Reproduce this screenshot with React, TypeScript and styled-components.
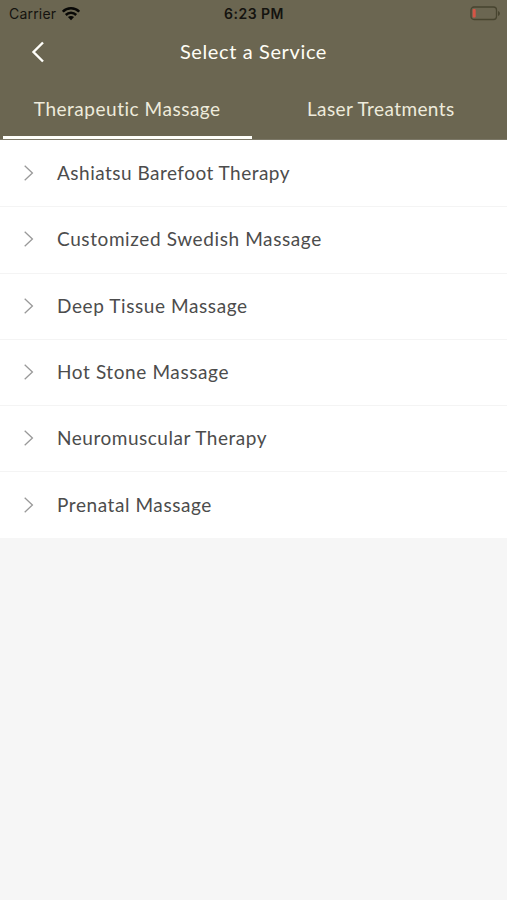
import React from "react";
import styled, { createGlobalStyle } from "styled-components";

const GlobalStyle = createGlobalStyle`
  * { box-sizing: border-box; }
  body { margin: 0; background: #f6f6f6; font-family: Lato, "Open Sans", sans-serif; }
`;

const Screen = styled.div`
  width: 100%;
  height: 900px;
  background: #f6f6f6;
  overflow: hidden;
`;

const Header = styled.header`
  height: 140px;
  background: #6b6651;
  border-bottom: 1px solid #7c7867;
`;

const StatusBar = styled.div`
  display: grid;
  grid-template-columns: 1fr auto 1fr;
  align-items: center;
  height: 27px;
  padding: 0 6px 0 9px;
  color: #14130f;
  font: 400 14px/18px Inter, sans-serif;
`;

const Carrier = styled.div`
  display: flex;
  align-items: center;
  gap: 6px;
  letter-spacing: 0.2px;
`;

const Clock = styled.div`
  margin-right: 2px;
  font-weight: 600;
  letter-spacing: 0.5px;
`;

const BatterySlot = styled.div`
  display: flex;
  justify-content: flex-end;
`;

const NavBar = styled.div`
  display: grid;
  grid-template-columns: 76px 1fr 76px;
  align-items: center;
  height: 51px;
`;

const BackButton = styled.button`
  display: flex;
  justify-content: center;
  padding: 0 0 2px;
  border: 0;
  background: none;
`;

const Title = styled.h1<{ $tracking: number }>`
  margin: 0;
  padding-bottom: 4px;
  color: #fffef6;
  font-size: 20px;
  line-height: 26px;
  font-weight: 400;
  text-align: center;
  white-space: nowrap;
  letter-spacing: ${(p) => p.$tracking}px;
`;

const Tabs = styled.nav`
  display: grid;
  grid-template-columns: 1fr 1fr;
  height: 61px;
`;

const Tab = styled.button<{ $active?: boolean; $tracking: number }>`
  height: 61px;
  margin: 0 2px 0 3px;
  padding: 4px 0 0;
  border: 0;
  border-bottom: 3px solid ${(p) => (p.$active ? "#fffffb" : "transparent")};
  background: none;
  color: #eeebdc;
  font: 400 19px/26px Lato, sans-serif;
  letter-spacing: ${(p) => p.$tracking}px;
`;

const List = styled.ul`
  margin: 0;
  padding: 0;
  list-style: none;
  background: #fff;
`;

const Row = styled.li`
  display: flex;
  align-items: center;
  gap: 22px;
  height: 66.3px;
  padding-left: 23px;

  & + & {
    padding-bottom: 1px;
    border-top: 1px solid #f4f4f4;
  }
`;

const Label = styled.span<{ $tracking: number }>`
  color: #4c4c4c;
  font-size: 19px;
  line-height: 26px;
  white-space: nowrap;
  letter-spacing: ${(p) => p.$tracking}px;
`;

const services = [
  { name: "Ashiatsu Barefoot Therapy", tracking: 0.48 },
  { name: "Customized Swedish Massage", tracking: 0.6 },
  { name: "Deep Tissue Massage", tracking: 0.59 },
  { name: "Hot Stone Massage", tracking: 0.6 },
  { name: "Neuromuscular Therapy", tracking: 0.52 },
  { name: "Prenatal Massage", tracking: 0.57 },
];

const WifiIcon = () => (
  <svg width="18" height="14" viewBox="0 0 18 14" fill="none" stroke="#080806" strokeWidth="2.5">
    <path d="M.8 4.7C5.2.2 12.8.2 17.2 4.7" />
    <path d="M3.8 8c2.9-2.9 7.5-2.9 10.4 0" />
    <path d="M9 13.3 5.9 10.1c1.7-1.6 4.5-1.6 6.2 0Z" fill="#080806" stroke="none" />
  </svg>
);

const BatteryIcon = () => (
  <svg width="31" height="15" viewBox="0 0 31 15" fill="none">
    <rect x="1" y="1" width="25.5" height="12.5" rx="3" stroke="#47442f" strokeWidth="1.3" />
    <rect x="2.7" y="3" width="3" height="8.5" rx="1" fill="#d65445" />
    <path d="M28 5v5c2.5-1 2.5-4 0-5Z" fill="#47442f" />
  </svg>
);

const BackIcon = () => (
  <svg width="14" height="22" viewBox="0 0 14 22" fill="none" stroke="#fffffa" strokeWidth="2.4">
    <path d="M12 1.5 2.5 11 12 20.5" />
  </svg>
);

const ChevronIcon = () => (
  <svg width="12" height="16" viewBox="0 0 12 16" fill="none" stroke="#999" strokeWidth="1.3">
    <path d="m1.7.8 7.7 7.2-7.7 7.2" />
  </svg>
);

export default function App() {
  return (
    <Screen>
      <GlobalStyle />
      <Header>
        <StatusBar>
          <Carrier>Carrier <WifiIcon /></Carrier>
          <Clock>6:23 PM</Clock>
          <BatterySlot><BatteryIcon /></BatterySlot>
        </StatusBar>
        <NavBar>
          <BackButton aria-label="Back"><BackIcon /></BackButton>
          <Title $tracking={0.62}>Select a Service</Title>
        </NavBar>
        <Tabs>
          <Tab $active $tracking={0.52}>Therapeutic Massage</Tab>
          <Tab $tracking={0.4}>Laser Treatments</Tab>
        </Tabs>
      </Header>
      <List>
        {services.map((service) => (
          <Row key={service.name}>
            <ChevronIcon />
            <Label $tracking={service.tracking}>{service.name}</Label>
          </Row>
        ))}
      </List>
    </Screen>
  );
}
